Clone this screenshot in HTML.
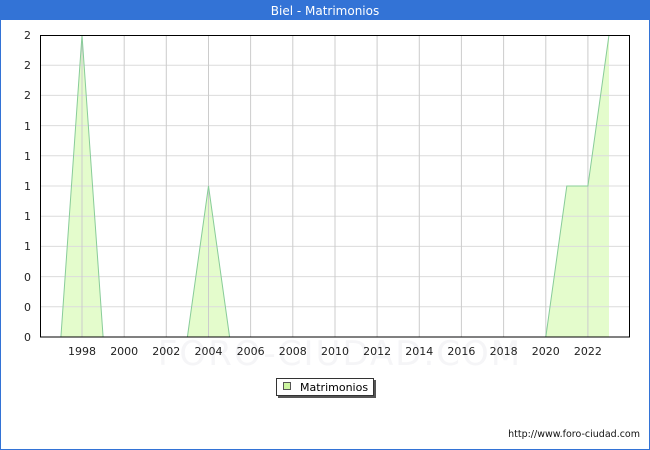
<!DOCTYPE html>
<html><head><meta charset="utf-8"><style>
body{margin:0;width:650px;height:450px;overflow:hidden;background:#fff}
svg{display:block}
text{font-family:"DejaVu Sans","Liberation Sans",sans-serif}
</style></head><body>
<svg width="650" height="450" xmlns="http://www.w3.org/2000/svg">
<rect x="0.5" y="0.5" width="649" height="449" fill="#fff" stroke="#3373d6"/>
<rect x="0" y="0" width="650" height="20" fill="#3373d6"/>
<text x="325" y="15" text-anchor="middle" font-size="12" fill="#fff">Biel - Matrimonios</text>
<text x="340" y="365" text-anchor="middle" font-size="34" fill="#f5f5f7" letter-spacing="2">FORO-CIUDAD.COM</text>
<g fill="#e4fccc" stroke="none">
<polygon points="60.9,337 82,35 103.1,337"/>
<polygon points="187.4,337 208.5,186 229.6,337"/>
<polygon points="545.8,337 566.8,186 587.9,186 609,35 609,337"/>
</g>
<g stroke="#dcdcdc" stroke-width="1">
<line x1="40" x2="630" y1="65.2" y2="65.2"/><line x1="40" x2="630" y1="95.4" y2="95.4"/><line x1="40" x2="630" y1="125.6" y2="125.6"/><line x1="40" x2="630" y1="155.8" y2="155.8"/><line x1="40" x2="630" y1="186" y2="186"/><line x1="40" x2="630" y1="216.2" y2="216.2"/><line x1="40" x2="630" y1="246.4" y2="246.4"/><line x1="40" x2="630" y1="276.6" y2="276.6"/><line x1="40" x2="630" y1="306.8" y2="306.8"/>
</g>
<g stroke="#cccccc" stroke-width="1">
<line x1="82" x2="82" y1="35" y2="337"/><line x1="124.2" x2="124.2" y1="35" y2="337"/><line x1="166.3" x2="166.3" y1="35" y2="337"/><line x1="208.5" x2="208.5" y1="35" y2="337"/><line x1="250.6" x2="250.6" y1="35" y2="337"/><line x1="292.8" x2="292.8" y1="35" y2="337"/><line x1="335" x2="335" y1="35" y2="337"/><line x1="377.1" x2="377.1" y1="35" y2="337"/><line x1="419.3" x2="419.3" y1="35" y2="337"/><line x1="461.4" x2="461.4" y1="35" y2="337"/><line x1="503.6" x2="503.6" y1="35" y2="337"/><line x1="545.8" x2="545.8" y1="35" y2="337"/><line x1="587.9" x2="587.9" y1="35" y2="337"/>
</g>
<g fill="none" stroke="#88cc99" stroke-width="1">
<polyline points="60.9,337 82,35 103.1,337"/>
<polyline points="187.4,337 208.5,186 229.6,337"/>
<polyline points="545.8,337 566.8,186 587.9,186 609,35"/>
</g>
<rect x="40.5" y="35.5" width="589" height="301.5" fill="none" stroke="#000"/>
<g font-size="11" fill="#222" text-anchor="end">
<text x="31" y="39">2</text><text x="31" y="69">2</text><text x="31" y="99">2</text><text x="31" y="130">1</text><text x="31" y="160">1</text><text x="31" y="190">1</text><text x="31" y="220">1</text><text x="31" y="250">1</text><text x="31" y="281">0</text><text x="31" y="311">0</text><text x="31" y="341">0</text>
</g>
<g font-size="11" fill="#222" text-anchor="middle">
<text x="82" y="355">1998</text><text x="124.2" y="355">2000</text><text x="166.3" y="355">2002</text><text x="208.5" y="355">2004</text><text x="250.6" y="355">2006</text><text x="292.8" y="355">2008</text><text x="335" y="355">2010</text><text x="377.1" y="355">2012</text><text x="419.3" y="355">2014</text><text x="461.4" y="355">2016</text><text x="503.6" y="355">2018</text><text x="545.8" y="355">2020</text><text x="587.9" y="355">2022</text>
</g>
<rect x="278" y="380" width="98" height="18" fill="#555"/>
<rect x="276.5" y="378.5" width="97" height="17" fill="#fff" stroke="#333"/>
<rect x="283.5" y="382.5" width="7" height="7" fill="#ccf5a0" stroke="#555"/>
<text x="300" y="391" font-size="11" fill="#000">Matrimonios</text>
<text x="640" y="437" text-anchor="end" font-size="9.5" fill="#111">http://www.foro-ciudad.com</text>
</svg>
</body></html>
